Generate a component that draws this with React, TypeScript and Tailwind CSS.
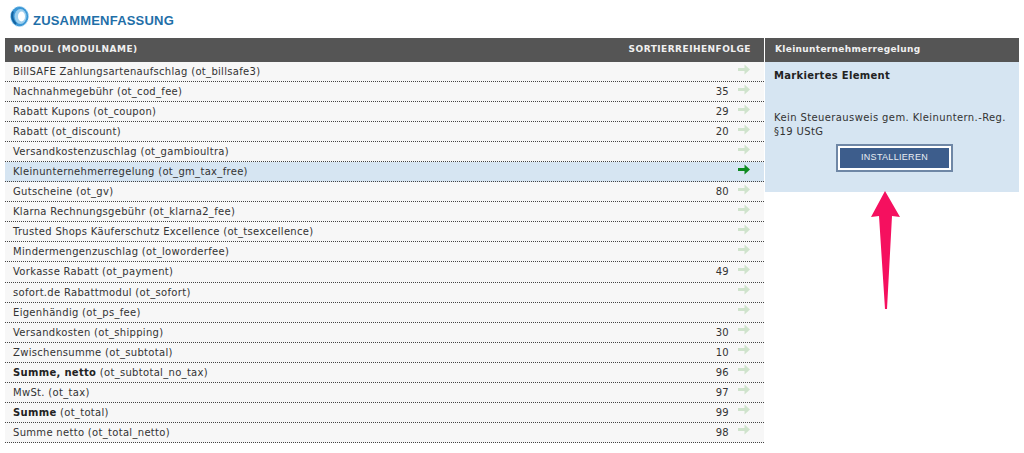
import React from 'react';

type Row = { label: string; name: string; sort?: number; bold?: boolean; active?: boolean };

const rows: Row[] = [
  { label: 'BillSAFE Zahlungsartenaufschlag', name: 'ot_billsafe3' },
  { label: 'Nachnahmegebühr', name: 'ot_cod_fee', sort: 35 },
  { label: 'Rabatt Kupons', name: 'ot_coupon', sort: 29 },
  { label: 'Rabatt', name: 'ot_discount', sort: 20 },
  { label: 'Versandkostenzuschlag', name: 'ot_gambioultra' },
  { label: 'Kleinunternehmerregelung', name: 'ot_gm_tax_free', active: true },
  { label: 'Gutscheine', name: 'ot_gv', sort: 80 },
  { label: 'Klarna Rechnungsgebühr', name: 'ot_klarna2_fee' },
  { label: 'Trusted Shops Käuferschutz Excellence', name: 'ot_tsexcellence' },
  { label: 'Mindermengenzuschlag', name: 'ot_loworderfee' },
  { label: 'Vorkasse Rabatt', name: 'ot_payment', sort: 49 },
  { label: 'sofort.de Rabattmodul', name: 'ot_sofort' },
  { label: 'Eigenhändig', name: 'ot_ps_fee' },
  { label: 'Versandkosten', name: 'ot_shipping', sort: 30 },
  { label: 'Zwischensumme', name: 'ot_subtotal', sort: 10 },
  { label: 'Summe, netto', name: 'ot_subtotal_no_tax', sort: 96, bold: true },
  { label: 'MwSt.', name: 'ot_tax', sort: 97 },
  { label: 'Summe', name: 'ot_total', sort: 99, bold: true },
  { label: 'Summe netto', name: 'ot_total_netto', sort: 98 },
];

const RowArrow = ({ active }: { active?: boolean }) => (
  <svg width="12" height="11" viewBox="0 0 12 11" className={active ? 'text-[#0d8a1f]' : 'text-[#cfe3cc]'}>
    <path d="M0 4h6.5V0.5L12 5.5l-5.5 5V7H0z" fill="currentColor" />
  </svg>
);

// tyre shaped logo
const Logo = () => (
  <svg width="19" height="21" viewBox="0 0 19 21">
    <ellipse cx="9.5" cy="10.5" rx="9" ry="10" fill="#3b97d6" />
    <ellipse cx="9.5" cy="10.5" rx="9" ry="10" fill="none" stroke="#a9d6f2" strokeWidth="1" strokeDasharray="2 1.5" />
    <ellipse cx="10.5" cy="10.5" rx="6" ry="7.5" fill="#9ccfee" />
    <ellipse cx="11.5" cy="10.5" rx="3.5" ry="5" fill="#ffffff" />
    <path d="M3 5.5c-1.5 4-1 8.5 3 12.5" stroke="#14639f" strokeWidth="2" fill="none" />
  </svg>
);

export default function App() {
  return (
    <div className="w-[1024px] h-[453px] overflow-hidden bg-white pl-[5px] pt-[6px] font-['DejaVu_Sans',sans-serif] text-[10px] tracking-[0.31px] text-[#333333]">
      <div className="flex h-[32px] items-start gap-[4px] pl-[5px]">
        <Logo />
        <h1 className="mt-[7px] font-['Liberation_Sans',sans-serif] text-[13px] leading-[16px] font-bold tracking-[0.2px] text-[#1f6fa8]">
          ZUSAMMENFASSUNG
        </h1>
      </div>

      <div className="flex items-start">
        <div className="w-[759px]">
          <div className="flex h-[24px] items-center justify-between bg-[#555555] pr-[13px] pl-[9px] text-[9px] font-bold tracking-[0.5px] text-[#f0f0f0]">
            <span>MODUL (MODULNAME)</span>
            <span className="tracking-[0.47px]">SORTIERREIHENFOLGE</span>
          </div>
          {rows.map((row) => (
            <div
              key={row.name}
              className={`flex h-[20.06px] items-center border-b border-dotted border-[#444444] pr-[14px] pl-[8px] ${row.active ? 'bg-[#d6e5f2]' : 'bg-[#f7f7f7]'}`}
            >
              <span className="flex-1 whitespace-nowrap">
                {row.bold ? <b className="text-[#222222]">{row.label}</b> : row.label} ({row.name})
              </span>
              <span className="mr-[9px]">{row.sort}</span>
              <span className="-mt-[5px] flex">
                <RowArrow active={row.active} />
              </span>
            </div>
          ))}
        </div>

        <div className="relative ml-px w-[254px]">
          <div className="flex h-[24px] items-center bg-[#555555] pl-[10px] text-[9px] font-bold tracking-[0.33px] text-[#f0f0f0]">
            Kleinunternehmerregelung
          </div>
          <div className="h-[130px] bg-[#d6e5f2] pr-[4px] pl-[9px] pt-[7px]">
            <p className="leading-[13px] font-bold text-[#222222]">Markiertes Element</p>
            <p className="mt-[29px] leading-[14px] tracking-[0.39px]">Kein Steuerausweis gem. Kleinuntern.-Reg. §19 UStG</p>
            <div className="mt-[5px] flex justify-center">
              <button className="h-[28px] w-[117px] border-2 border-[#6f87a6] bg-[#3d5d8c] font-['Liberation_Sans',sans-serif] text-[9px] text-[#e8edf3] outline-2 -outline-offset-4 outline-white">
                INSTALLIEREN
              </button>
            </div>
          </div>
          <svg width="34" height="122" viewBox="0 0 34 122" className="absolute top-[153px] left-[103px]">
            <path d="M17 0 L32 26 L24 25 L19 118 L17 118 L11 25 L3 26 Z" fill="#f5105f" />
          </svg>
        </div>
      </div>
    </div>
  );
}
